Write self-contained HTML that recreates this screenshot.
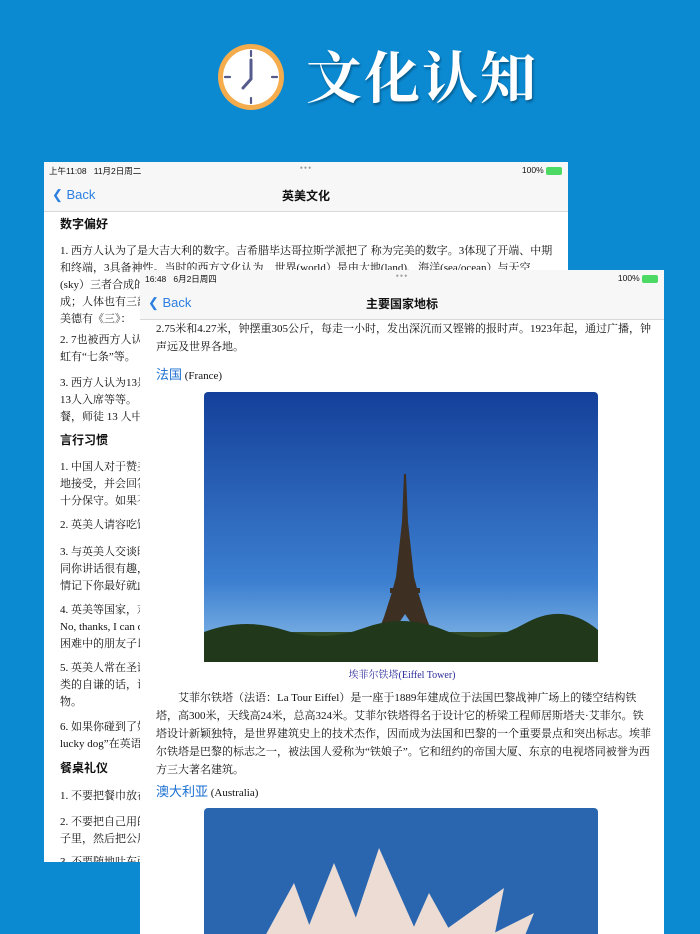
<!DOCTYPE html>
<html><head><meta charset="utf-8">
<style>
*{margin:0;padding:0;box-sizing:border-box}
body{width:700px;height:934px;overflow:hidden;background:#0b89d1;position:relative;font-family:"Liberation Serif","Noto Serif CJK SC",serif;color:#111}
.sans{font-family:"Liberation Sans","Noto Sans CJK SC",sans-serif}
.title{position:absolute;left:306px;top:40px;font-family:"Noto Serif CJK SC",serif;font-size:56px;font-weight:700;color:#fff;letter-spacing:2px;line-height:70px;text-shadow:1px 2px 2px rgba(0,0,0,.35)}
.panel{position:absolute;background:#fff;overflow:hidden}
.status{position:absolute;left:0;right:0;top:0;height:18px;background:#f7f7f7;font-size:8.5px;padding:3px 5px}
.nav{position:absolute;left:0;right:0;top:18px;height:32px;background:#f7f7f7;border-bottom:1px solid #d8d8d8}
.back{position:absolute;left:8px;top:7px;font-size:13px;color:#2a7fe0}
.navt{position:absolute;left:0;right:0;top:7px;text-align:center;font-size:12px;font-weight:700}
.dots{position:absolute;left:0;right:0;top:1px;text-align:center;color:#999;font-size:9px;letter-spacing:1px}
.l{position:absolute;white-space:nowrap;font-size:11px;line-height:17px}
.h{font-family:"Liberation Sans","Noto Sans CJK SC",sans-serif;font-weight:700;font-size:12px}
.blue{color:#1a6fd0;font-family:"Liberation Sans","Noto Sans CJK SC",sans-serif;font-size:13px}
.bat{display:inline-block;width:16px;height:8px;background:#4cd964;border-radius:2px;vertical-align:middle}
</style></head><body>
<svg style="position:absolute;left:216px;top:42px" width="70" height="70" viewBox="0 0 70 70">
<circle cx="35" cy="35" r="33" fill="#f4ac4d"/><circle cx="35" cy="35" r="28" fill="#fff"/>
<path d="M35 7a28 28 0 0 1 0 56a28 28 0 0 0 0-56" fill="#e4ecf7"/>
<g stroke="#555b8c" stroke-width="2.2" stroke-linecap="round"><line x1="35" y1="9" x2="35" y2="14"/><line x1="35" y1="56" x2="35" y2="61"/><line x1="9" y1="35" x2="14" y2="35"/><line x1="56" y1="35" x2="61" y2="35"/>
<polyline points="35,18 35,37 27,46" fill="none" stroke-width="3"/></g></svg>
<div class="title">文化认知</div>

<div class="panel" style="left:44px;top:162px;width:524px;height:700px">
 <div class="status sans"><span>上午11:08&nbsp;&nbsp; 11月2日周二</span><span style="position:absolute;right:6px">100% <span class="bat"></span></span></div>
 <div class="dots">•••</div>
 <div class="nav sans"><span class="back">❮ Back</span><div class="navt">英美文化</div></div>
 <div style="position:absolute;left:16px;top:0">
 <div class="l h" style="top:54px">数字偏好</div>
 <div class="l" style="top:81px">1. 西方人认为了是大吉大利的数字。吉希腊毕达哥拉斯学派把了 称为完美的数字。3体现了开端、中期</div>
 <div class="l" style="top:98px">和终端，3具备神性。当时的西方文化认为，世界(world）是由大地(land)、海洋(sea/ocean）与天空</div>
 <div class="l" style="top:115px">(sky）三者合成的</div>
 <div class="l" style="top:132px">成；人体也有三部</div>
 <div class="l" style="top:149px">美德有《三》：</div>
 <div class="l" style="top:170px">2. 7也被西方人认为</div>
 <div class="l" style="top:187px">虹有“七条”等。</div>
 <div class="l" style="top:213px">3. 西方人认为13是</div>
 <div class="l" style="top:230px">13人入席等等。</div>
 <div class="l" style="top:247px">餐，师徒 13 人中</div>
 <div class="l h" style="top:270px">言行习惯</div>
 <div class="l" style="top:297px">1. 中国人对于赞美</div>
 <div class="l" style="top:314px">地接受，并会回答</div>
 <div class="l" style="top:331px">十分保守。如果不</div>
 <div class="l" style="top:355px">2. 英美人请容吃饭</div>
 <div class="l" style="top:382px">3. 与英美人交谈时</div>
 <div class="l" style="top:399px">同你讲话很有趣，</div>
 <div class="l" style="top:416px">情记下你最好就此</div>
 <div class="l" style="top:440px">4. 英美等国家，对</div>
 <div class="l" style="top:457px">No, thanks, I can do</div>
 <div class="l" style="top:474px">困难中的朋友子以</div>
 <div class="l" style="top:498px">5. 英美人常在圣诞</div>
 <div class="l" style="top:515px">类的自谦的话，请</div>
 <div class="l" style="top:532px">物。</div>
 <div class="l" style="top:557px">6. 如果你碰到了好</div>
 <div class="l" style="top:574px">lucky dog”在英语中</div>
 <div class="l h" style="top:598px">餐桌礼仪</div>
 <div class="l" style="top:626px">1. 不要把餐巾放在</div>
 <div class="l" style="top:652px">2. 不要把自己用的</div>
 <div class="l" style="top:669px">子里，然后把公用</div>
 <div class="l" style="top:692px">3. 不要随地吐东西</div>
 </div>
</div>

<div class="panel" style="left:140px;top:270px;width:524px;height:664px">
 <div class="status sans"><span>16:48&nbsp;&nbsp; 6月2日周四</span><span style="position:absolute;right:6px">100% <span class="bat"></span></span></div>
 <div class="dots">•••</div>
 <div class="nav sans"><span class="back">❮ Back</span><div class="navt">主要国家地标</div></div>
 <div class="l" style="left:16px;top:51px">2.75米和4.27米，钟摆重305公斤，每走一小时，发出深沉而又铿锵的报时声。1923年起，通过广播，钟</div>
 <div class="l" style="left:16px;top:69px">声远及世界各地。</div>
 <div style="position:absolute;left:16px;top:94px;font-size:11px"><span class="blue">法国</span> (France)</div>
 <svg style="position:absolute;left:64px;top:122px" width="394" height="270" viewBox="0 0 394 270">
  <defs><linearGradient id="s" x1="0" y1="0" x2="0" y2="1"><stop offset="0" stop-color="#14409a"/><stop offset="0.7" stop-color="#3c7fd0"/><stop offset="1" stop-color="#8fc0ea"/></linearGradient></defs>
  <rect width="394" height="270" rx="4" fill="url(#s)"/>
  <path d="M200 82 L202 82 L204 130 L210 185 L214 200 L222 225 L232 250 L220 250 L201 222 L182 250 L170 250 L180 225 L188 200 L192 185 L198 130 Z" fill="#3d2f22"/>
  <rect x="186" y="196" width="30" height="5" fill="#3d2f22"/>
  <rect y="240" width="394" height="30" fill="#2f4a25"/>
  <path d="M0 240 Q40 225 80 238 T160 236 T240 238 T320 232 T394 238 V270 H0Z" fill="#22381b"/>
 </svg>
 <div style="position:absolute;left:0;width:524px;top:396px;text-align:center;font-size:10px;color:#2a2a9a">埃菲尔铁塔(Eiffel Tower)</div>
 <div class="l" style="left:38px;top:419px;line-height:18px">艾菲尔铁塔（法语：La Tour Eiffel）是一座于1889年建成位于法国巴黎战神广场上的镂空结构铁</div>
 <div class="l" style="left:16px;top:437px;line-height:18px">塔，高300米，天线高24米，总高324米。艾菲尔铁塔得名于设计它的桥梁工程师居斯塔夫·艾菲尔。铁</div>
 <div class="l" style="left:16px;top:455px;line-height:18px">塔设计新颖独特，是世界建筑史上的技术杰作，因而成为法国和巴黎的一个重要景点和突出标志。埃菲</div>
 <div class="l" style="left:16px;top:473px;line-height:18px">尔铁塔是巴黎的标志之一，被法国人爱称为“铁娘子”。它和纽约的帝国大厦、东京的电视塔同被誉为西</div>
 <div class="l" style="left:16px;top:491px;line-height:18px">方三大著名建筑。</div>
 <div style="position:absolute;left:16px;top:511px;font-size:11px"><span class="blue">澳大利亚</span> (Australia)</div>
 <svg style="position:absolute;left:64px;top:538px" width="394" height="130" viewBox="0 0 394 130">
  <rect width="394" height="140" rx="4" fill="#2a66b0"/>
  <path d="M60 130 L90 75 L110 130Z M100 130 L130 55 L160 130Z M145 130 L175 40 L215 130Z M205 130 L225 85 L250 130Z M230 130 L300 80 L290 130Z M280 130 L330 105 L320 130Z" fill="#ecdcd4"/>
 </svg>
</div>
</body></html>
